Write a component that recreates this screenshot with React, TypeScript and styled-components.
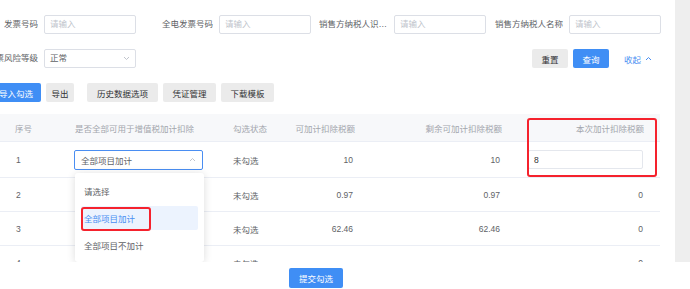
import React from 'react';
import styled, { createGlobalStyle } from 'styled-components';

const Global = createGlobalStyle`
  html, body { margin: 0; padding: 0; background: #fff; overflow: hidden; }
  body {
    font-family: "Liberation Sans", "Noto Sans CJK SC", sans-serif;
    font-size: 8.5px;
    color: #606266;
  }
  * { box-sizing: border-box; }
`;

const Page = styled.div`
  width: 690px;
  height: 289px;
  overflow: hidden;
  display: flex;
  flex-direction: column;
`;

const Body = styled.div`
  display: flex;
  height: 262px;
  flex: none;
`;

const Content = styled.div`
  width: 675px;
  height: 262px;
  position: relative;
  overflow: hidden;
`;

const Track = styled.div`
  width: 15px;
  background: #eeeeee;
`;

const Form = styled.div`
  margin-top: -19px;
  margin-left: -36px;
  display: flex;
  flex-direction: column;
  gap: 15px;
`;

const FormRow = styled.div`
  display: flex;
  align-items: center;
  gap: 3px;
  height: 19px;
  padding-right: 23px;
`;

const Item = styled.div`
  display: flex;
  width: 172px;
  flex: none;
`;

const Label = styled.label`
  width: 80px;
  padding: 0 6px 0 5px;
  text-align: right;
  white-space: nowrap;
  overflow: hidden;
  text-overflow: ellipsis;
  line-height: 19px;
  color: #606266;
`;

const Input = styled.div<{ $filled?: boolean }>`
  width: 92px;
  height: 19px;
  border: 1px solid #dcdfe6;
  border-radius: 2px;
  padding: 0 5px;
  line-height: 17px;
  color: ${(p) => (p.$filled ? '#606266' : '#c0c4cc')};
  display: flex;
  align-items: center;
  justify-content: space-between;
`;

const Actions = styled.div`
  margin-left: auto;
  display: flex;
  align-items: center;
`;

const Btn = styled.div<{ $primary?: boolean; $w: number; $ml?: number; $h?: number }>`
  width: ${(p) => p.$w}px;
  margin-left: ${(p) => p.$ml ?? 0}px;
  height: ${(p) => p.$h ?? 19}px;
  flex: none;
  display: flex;
  align-items: center;
  justify-content: center;
  border-radius: 2px;
  background: ${(p) => (p.$primary ? '#3f8ef5' : '#ebebeb')};
  color: ${(p) => (p.$primary ? '#ffffff' : '#303133')};
  white-space: nowrap;
`;

const LinkBtn = styled.div`
  margin-left: 15px;
  color: #4a8ef2;
  display: flex;
  align-items: center;
  gap: 4px;
`;

const Toolbar = styled.div`
  margin-top: 15px;
  margin-left: -9px;
  display: flex;
  height: 19px;
`;

const Table = styled.div`
  margin-top: 12px;
  width: 660px;
`;

const Row = styled.div<{ $head?: boolean; $h: number }>`
  display: grid;
  grid-template-columns: 60px 160px 55px 90px 147px 148px;
  height: ${(p) => p.$h}px;
  align-items: center;
  background: ${(p) => (p.$head ? '#f7f8fa' : '#fff')};
  color: ${(p) => (p.$head ? '#a3a6ad' : '#606266')};
  border-bottom: 1px solid #ebeef5;
`;

const Cell = styled.div<{ $right?: boolean; $pl?: number; $pr?: number }>`
  padding-left: ${(p) => p.$pl ?? 0}px;
  padding-right: ${(p) => p.$pr ?? 0}px;
  text-align: ${(p) => (p.$right ? 'right' : 'left')};
  white-space: nowrap;
  display: flex;
  justify-content: ${(p) => (p.$right ? 'flex-end' : 'flex-start')};
`;

const Select = styled.div<{ $active?: boolean }>`
  width: 129px;
  height: 20px;
  border: 1px solid ${(p) => (p.$active ? '#4a8ef2' : '#dcdfe6')};
  border-radius: 2px;
  padding: 0 6px 0 6px;
  display: flex;
  align-items: center;
  justify-content: space-between;
  color: #606266;
`;

const CellInput = styled.div`
  width: 115px;
  height: 19px;
  border: 1px solid #e4e7ed;
  border-radius: 2px;
  padding: 0 5px;
  display: flex;
  align-items: center;
  color: #303133;
`;

const Dropdown = styled.div`
  position: absolute;
  left: 75px;
  top: 173px;
  width: 129px;
  height: 89px;
  background: #fff;
  border-radius: 3px;
  box-shadow: 0 1px 8px rgba(0, 0, 0, 0.14);
  padding: 6px 6px 5px;
  display: flex;
  flex-direction: column;
  gap: 3px;
`;

const Option = styled.div<{ $selected?: boolean }>`
  height: 24px;
  padding-left: 3px;
  display: flex;
  align-items: center;
  border-radius: 2px;
  background: ${(p) => (p.$selected ? '#ecf3fe' : 'transparent')};
  color: ${(p) => (p.$selected ? '#4a8ef2' : '#606266')};
  position: relative;
`;

const Mark = styled.div<{ $l: number; $t: number; $w: number; $h: number }>`
  position: absolute;
  left: ${(p) => p.$l}px;
  top: ${(p) => p.$t}px;
  width: ${(p) => p.$w}px;
  height: ${(p) => p.$h}px;
  border: 2px solid #f5222d;
  border-radius: 3px;
  pointer-events: none;
`;

const Footer = styled.div`
  height: 27px;
  padding: 6px 0 0 289px;
  display: flex;
  background: #fff;
`;

const Chevron = ({ up, color = '#c0c4cc' }: { up?: boolean; color?: string }) => (
  <svg width="7" height="5" viewBox="0 0 7 5" style={{ display: 'block' }}>
    <polyline
      points={up ? '1,4 3.5,1.5 6,4' : '1,1 3.5,3.5 6,1'}
      fill="none"
      stroke={color}
      strokeWidth="1"
    />
  </svg>
);

const topSlots = ['a', 'b', 'c', 'd'];

const rows = [
  { no: '1', a: '10', b: '10', c: '8' },
  { no: '2', a: '0.97', b: '0.97', c: '0' },
  { no: '3', a: '62.46', b: '62.46', c: '0' },
  { no: '4', a: '', b: '', c: '0' },
];

export default function App() {
  return (
    <Page>
      <Global />
      <Body>
        <Content>
          <Form>
            <FormRow>
              {topSlots.map((k) => (
                <Item key={k}>
                  <Label />
                  <Input />
                </Item>
              ))}
            </FormRow>
            <FormRow>
              <Item>
                <Label>发票号码</Label>
                <Input>请输入</Input>
              </Item>
              <Item>
                <Label>全电发票号码</Label>
                <Input>请输入</Input>
              </Item>
              <Item>
                <Label>销售方纳税人识别号</Label>
                <Input>请输入</Input>
              </Item>
              <Item>
                <Label>销售方纳税人名称</Label>
                <Input>请输入</Input>
              </Item>
            </FormRow>
            <FormRow>
              <Item>
                <Label>发票风险等级</Label>
                <Input $filled>
                  <span>正常</span>
                  <Chevron />
                </Input>
              </Item>
              <Actions>
                <Btn $w={36}>重置</Btn>
                <Btn $w={36} $ml={5} $primary>
                  查询
                </Btn>
                <LinkBtn>
                  收起 <Chevron up color="#4a8ef2" />
                </LinkBtn>
              </Actions>
            </FormRow>
          </Form>

          <Toolbar>
            <Btn $w={50} $primary>
              导入勾选
            </Btn>
            <Btn $w={28} $ml={5}>导出</Btn>
            <Btn $w={71} $ml={13}>历史数据选项</Btn>
            <Btn $w={53} $ml={5}>凭证管理</Btn>
            <Btn $w={53} $ml={5}>下载模板</Btn>
          </Toolbar>

          <Table>
            <Row $head $h={28}>
              <Cell $pl={15}>序号</Cell>
              <Cell $pl={15}>是否全部可用于增值税加计扣除</Cell>
              <Cell $pl={13}>勾选状态</Cell>
              <Cell $right $pr={10}>可加计扣除税额</Cell>
              <Cell $right $pr={10}>剩余可加计扣除税额</Cell>
              <Cell $right $pr={16}>本次加计扣除税额</Cell>
            </Row>
            {rows.map((r, i) => (
              <Row key={r.no} $h={i === 0 ? 36 : 34}>
                <Cell $pl={16}>{r.no}</Cell>
                <Cell $pl={14}>
                  {i === 0 ? (
                    <Select $active>
                      <span>全部项目加计</span>
                      <Chevron up />
                    </Select>
                  ) : null}
                </Cell>
                <Cell $pl={13}>未勾选</Cell>
                <Cell $right $pr={12}>{r.a}</Cell>
                <Cell $right $pr={12}>{r.b}</Cell>
                <Cell $right $pr={17}>
                  {i === 0 ? <CellInput>{r.c}</CellInput> : r.c}
                </Cell>
              </Row>
            ))}
          </Table>

          <Dropdown>
            <Option>请选择</Option>
            <Option $selected>全部项目加计</Option>
            <Option>全部项目不加计</Option>
          </Dropdown>

          <Mark $l={81} $t={207} $w={70} $h={24} />
          <Mark $l={527} $t={118} $w={130} $h={59} />
        </Content>
        <Track />
      </Body>
      <Footer>
        <Btn $w={54} $h={20} $primary>
          提交勾选
        </Btn>
      </Footer>
    </Page>
  );
}
